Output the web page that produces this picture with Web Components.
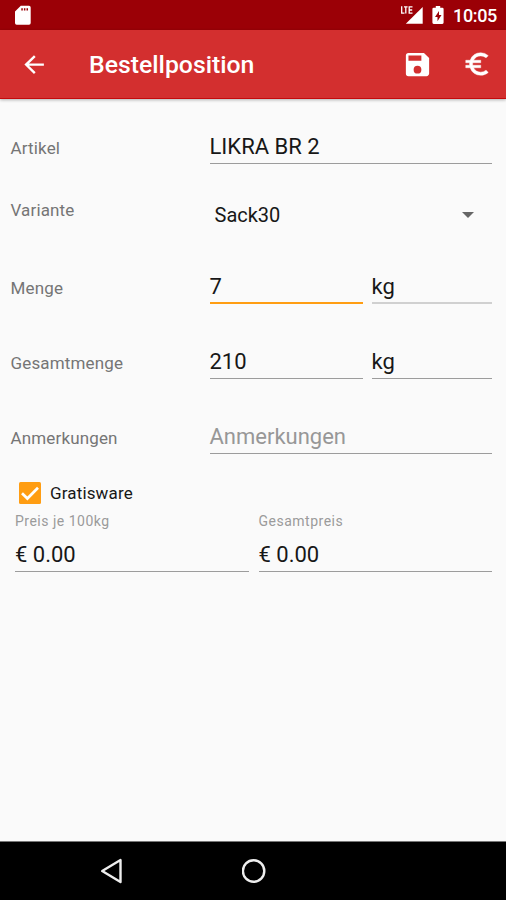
<!DOCTYPE html>
<html lang="de">
<head>
<meta charset="utf-8">
<title>Bestellposition</title>
<style>
html,body{margin:0;height:100%;overflow:hidden}
body{font-family:Roboto,"Liberation Sans",sans-serif;background:#fafafa;color:#212121}
</style>
</head>
<body>
<order-screen></order-screen>
<script>
const define = (name, html, setup) => customElements.define(name, class extends HTMLElement {
  constructor() {
    super();
    this.attachShadow({mode: 'open'}).innerHTML = html;
  }
  connectedCallback() { if (setup) setup(this, this.shadowRoot); }
});

define('status-bar', `
<style>
:host{display:flex;align-items:center;height:30px;box-sizing:border-box;padding:0 9px 0 14px;background:#9b0006;color:#fff}
svg{display:block;fill:#fff}
.gap{flex:1}
.time{font-size:18px;font-weight:500;line-height:30px;width:44px;white-space:nowrap;padding-top:2px;letter-spacing:-.35px}
</style>
<svg width="18" height="20" viewBox="0 0 18 20"><path fill-rule="evenodd" d="M6.8.8H15a1.7 1.7 0 0 1 1.7 1.7v15.600a1.700 1.700 0 0 1-1.700 1.700H2.700A1.700 1.700 0 0 1 1 18.100V6.500zM7.300 3.200v2.400h1.500V3.200zm2.600 0v2.400h1.500V3.200zm2.600 0v2.400H14V3.200z"/></svg>
<span class="gap"></span>
<svg width="24" height="20" viewBox="0 0 24 20" style="margin-right:8px"><path d="M22.700 2v16.800H5.800z"/><path fill="none" stroke="#fff" stroke-width="1.300" d="M1.700 1.200v7h2.800M4 1.800h3.600M5.800 1.800v6.800M12.500 1.800H9.200v6.400h3.300M9.200 5h3"/></svg>
<svg width="12" height="20" viewBox="0 0 12 20" style="margin-right:9px"><path fill-rule="evenodd" d="M3.800 1h4.400v1.800h2.100q1.300 0 1.300 1.300v13.500q0 1.400-1.300 1.400H1.700Q.4 19 .4 17.600V4.100q0-1.300 1.300-1.300h2.100zM7 6l-4 6h2.500v4.200l4-6.200H7z"/></svg>
<span class="time">10:05</span>`);

define('app-bar', `
<style>
:host{display:flex;align-items:center;height:68.500px;box-sizing:border-box;background:#d32f2f;color:#fff;padding:1px 14px 0 22px;border-bottom:1.500px solid #c40a0c;box-shadow:0 1px 3px rgba(0,0,0,.3);position:relative}
svg{display:block;fill:#fff}
h1{flex:1;margin:2px 0 0 42px;font-size:24.800px;font-weight:500;line-height:32px}
</style>
<svg width="25" height="25" viewBox="0 0 24 24"><path d="M21 11.100H6.700l6.400-6.400L11.500 3 2.300 12l9.200 9.100 1.600-1.600-6.400-6.300H21z"/></svg>
<h1><slot></slot></h1>
<svg width="31" height="31" viewBox="0 0 24 24" style="margin-right:29px"><path d="M17 3H5a2 2 0 0 0-2 2v14a2 2 0 0 0 2 2h14c1.100 0 2-.9 2-2V7zm-5 16a3 3 0 1 1 0-6 3 3 0 0 1 0 6zm3-10H5V5h10z"/></svg>
<svg width="30" height="30" viewBox="0 0 24 24"><path stroke="#fff" stroke-width=".35" d="M15 18.500A6.480 6.480 0 0 1 9.240 15H15v-2H8.580a6.500 6.500 0 0 1 0-2H15V9H9.240A6.490 6.490 0 0 1 15 5.500c1.610 0 3.090.59 4.230 1.570L21 5.300A8.960 8.960 0 0 0 15 3a9 9 0 0 0-8.480 6H3v2h3.060a8.300 8.300 0 0 0 0 2H3v2h3.520A9 9 0 0 0 15 21c2.310 0 4.410-.87 6-2.300l-1.780-1.770A6.400 6.400 0 0 1 15 18.500z"/></svg>`);

define('form-row', `
<style>
:host{display:grid;grid-template-columns:199px 1fr;height:34px;font-size:17px}
.label{color:#757575;line-height:37px;letter-spacing:.15px}
:host(.variant) .label{line-height:29px}
.fields{display:flex;gap:9px}
</style>
<span class="label"></span><div class="fields"><slot></slot></div>`,
(el, root) => root.querySelector('.label').textContent = el.getAttribute('label'));

define('text-field', `
<style>
:host{display:block;height:34px;box-sizing:border-box;padding-top:1px;font-size:22px;line-height:32px;border-bottom:1px solid #9c9c9c;color:#171717;flex:1;white-space:nowrap}
:host([kind=focus]){border-bottom:2px solid #ff9d12}
:host([kind=off]){border-bottom:2px solid #d0d0d0}
:host([kind=hint]){color:#979797}
</style><slot></slot>`);

define('drop-down', `
<style>
:host{display:flex;flex:1;align-items:center;justify-content:space-between;font-size:20px;height:37px;padding:0 18.500px 0 5px;color:#171717}
</style><span><slot></slot></span><svg width="12" height="6" viewBox="0 0 12 6"><path fill="#666" d="M0 0h12L6 6z"/></svg>`);

define('check-box', `
<style>
:host{display:flex;align-items:center;gap:9px;height:24px;font-size:17px;color:#171717;letter-spacing:.15px}
svg{display:block}
</style>
<svg width="22" height="22" viewBox="0 0 22 22"><rect width="22" height="22" rx="1.500" fill="#ff9d12"/><path d="M3 11.200l5.400 5.300L19 5.800" fill="none" stroke="#fff" stroke-width="2.700"/></svg><span><slot></slot></span>`);

define('price-field', `
<style>
:host{display:block;flex:1}
.cap{font-size:14px;line-height:18px;color:#9b9b9b;letter-spacing:.5px}
text-field{margin-top:8px}
</style><div class="cap"></div><text-field><slot></slot></text-field>`,
(el, root) => root.querySelector('.cap').textContent = el.getAttribute('label'));

define('nav-bar', `
<style>
:host{display:flex;align-items:center;height:59px;box-sizing:border-box;background:#000;border-top:1px solid #777;padding-left:100px;gap:118px}
svg{display:block;fill:none;stroke:#eee;stroke-width:2.400}
</style>
<svg width="24" height="26" viewBox="0 0 24 26"><path stroke-linejoin="round" d="M20.500 2v22L2.200 13z"/></svg>
<svg width="26" height="26" viewBox="0 0 26 26"><circle cx="11.600" cy="13" r="10.700"/></svg>`);

define('order-screen', `
<style>
:host{display:flex;flex-direction:column;height:900px;width:506px;background:#fafafa}
main{flex:1;padding:31.500px 14px 0 10.500px}
form-row{margin-bottom:41px}
form-row.variant{margin-top:-9px;margin-bottom:40px}
check-box{margin:27px 0 0 8.500px}
.last{margin-bottom:0}
.short{flex:0 0 153px}
.prices{display:flex;gap:10px;margin:7px 0 0 4.500px}
</style>
<status-bar></status-bar>
<app-bar>Bestellposition</app-bar>
<main>
<form-row label="Artikel"><text-field>LIKRA BR 2</text-field></form-row>
<form-row class="variant" label="Variante"><drop-down>Sack30</drop-down></form-row>
<form-row label="Menge"><text-field class="short" kind="focus">7</text-field><text-field kind="off">kg</text-field></form-row>
<form-row label="Gesamtmenge"><text-field class="short">210</text-field><text-field>kg</text-field></form-row>
<form-row class="last" label="Anmerkungen"><text-field kind="hint">Anmerkungen</text-field></form-row>
<check-box>Gratisware</check-box>
<div class="prices"><price-field label="Preis je 100kg">€ 0.00</price-field><price-field label="Gesamtpreis">€ 0.00</price-field></div>
</main>
<nav-bar></nav-bar>`);
</script>
</body>
</html>
